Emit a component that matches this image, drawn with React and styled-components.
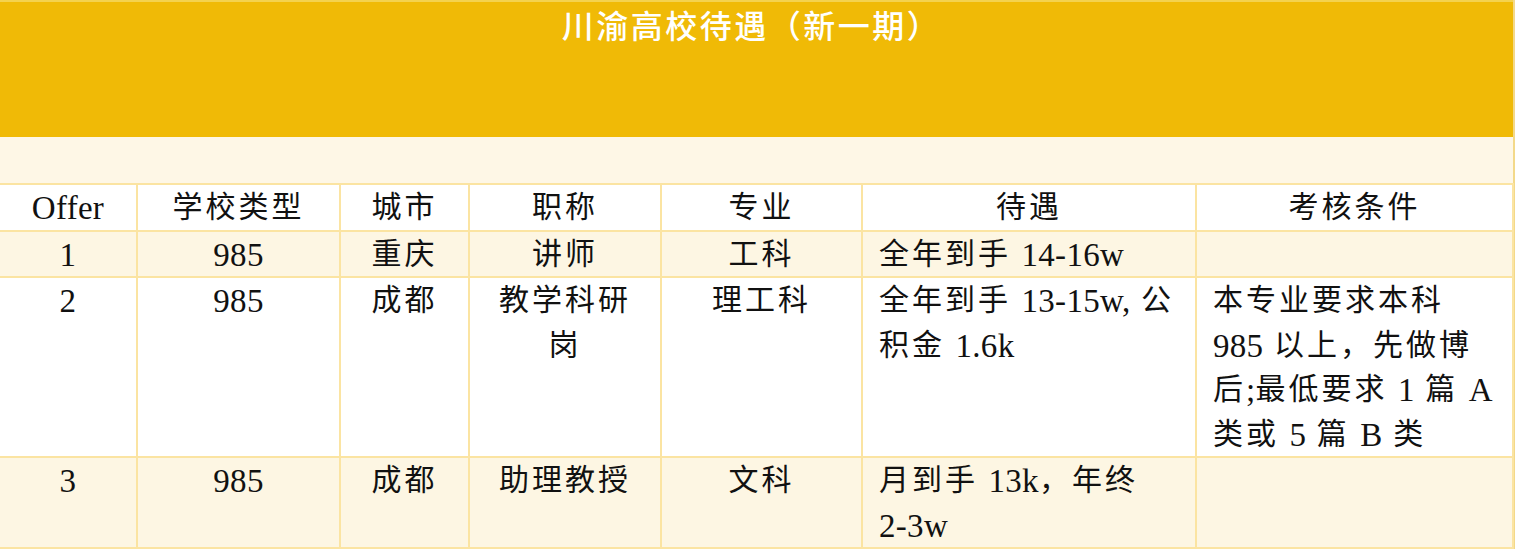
import React from 'react';
import styled, { createGlobalStyle, css } from 'styled-components';

const GlobalStyle = createGlobalStyle`
  html, body {
    margin: 0;
    padding: 0;
    background: #fef7e6;
  }
`;

const Page = styled.div`
  width: 1513px;
  display: flex;
  flex-direction: column;
  border-right: 2px solid #f3d98a;
`;

const TitleBand = styled.header`
  height: 137px;
  background: #f0ba06;
  border-top: 2px solid #f4d24e;
  display: flex;
  justify-content: center;
  align-items: flex-start;
  padding-top: 0;
  box-sizing: border-box;
`;

const Title = styled.h1`
  margin: 0 0 0 -10px;
  color: #ffffff;
  font-family: "Noto Sans CJK SC", "Noto Sans", sans-serif;
  font-weight: 500;
  font-size: 32px;
  line-height: 44px;
  letter-spacing: 2.5px;
`;

const Spacer = styled.div`
  height: 46px;
  background: #fef7e6;
`;

const Table = styled.table`
  width: 1513px;
  border-collapse: collapse;
  table-layout: fixed;
  font-family: "Liberation Serif", "Noto Sans CJK SC", serif;
  font-size: 30px;
  color: #111;
  border-top: 2px solid #fbe4a2;
`;

const Row = styled.tr`
  background: ${({ shaded }) => (shaded ? '#fdf6e3' : '#ffffff')};
`;

const Cell = styled.td`
  border: 2px solid #fbe4a2;
  border-left-width: ${({ first }) => (first ? '0' : '2px')};
  padding: 0 4px;
  line-height: 44.5px;
  vertical-align: top;
  text-align: center;
  letter-spacing: 3px;
  white-space: nowrap;
  ${({ left }) =>
    left &&
    css`
      text-align: left;
      padding-left: 16px;
    `}
`;

const HeadCell = styled(Cell).attrs({ as: 'th' })`
  font-weight: normal;
`;

const Latin = styled.span`
  font-size: 33px;
  letter-spacing: 0.3px;
  line-height: 1;
  vertical-align: -2px;
`;

const widths = [137, 203, 129, 192, 201, 334, 317];
const headers = ['Offer', '学校类型', '城市', '职称', '专业', '待遇', '考核条件'];

const rows = [
  {
    shaded: true,
    cells: ['1', '985', '重庆', '讲师', '工科', ['全年到手 14-16w'], ['']],
  },
  {
    shaded: false,
    cells: [
      '2',
      '985',
      '成都',
      ['教学科研', '岗'],
      '理工科',
      ['全年到手 13-15w, 公', '积金 1.6k'],
      ['本专业要求本科', '985 以上，先做博', '后;最低要求 1 篇 A', '类或 5 篇 B 类'],
    ],
  },
  {
    shaded: true,
    cells: ['3', '985', '成都', '助理教授', '文科', ['月到手 13k，年终', '2-3w'], ['']],
  },
];

// split a line into latin runs (set larger, unspaced) and CJK runs
const Text = ({ line }) =>
  line
    .split(/([\x21-\x7e][\x20-\x7e]*[\x21-\x7e]|[\x21-\x7e])/)
    .filter((part) => part !== '')
    .map((part, i) =>
      /[\x21-\x7e]/.test(part) ? <Latin key={i}>{part}</Latin> : <React.Fragment key={i}>{part}</React.Fragment>
    );

const Lines = ({ value }) => {
  const list = Array.isArray(value) ? value : [value];
  return list.map((line, i) => (
    <React.Fragment key={i}>
      {i > 0 && <br />}
      <Text line={line} />
    </React.Fragment>
  ));
};

const App = () => {
  return (
    <>
      <GlobalStyle />
      <Page>
        <TitleBand>
          <Title>川渝高校待遇（新一期）</Title>
        </TitleBand>
        <Spacer />
        <Table>
          <colgroup>
            {widths.map((w, i) => (
              <col key={i} style={{ width: w }} />
            ))}
          </colgroup>
          <thead>
            <Row>
              {headers.map((h, i) => (
                <HeadCell key={h} first={i === 0}>
                  <Lines value={h} />
                </HeadCell>
              ))}
            </Row>
          </thead>
          <tbody>
            {rows.map((r, ri) => (
              <Row key={ri} shaded={r.shaded}>
                {r.cells.map((c, ci) => (
                  <Cell key={ci} first={ci === 0} left={ci >= 5}>
                    <Lines value={c} />
                  </Cell>
                ))}
              </Row>
            ))}
          </tbody>
        </Table>
      </Page>
    </>
  );
};

export default App;
